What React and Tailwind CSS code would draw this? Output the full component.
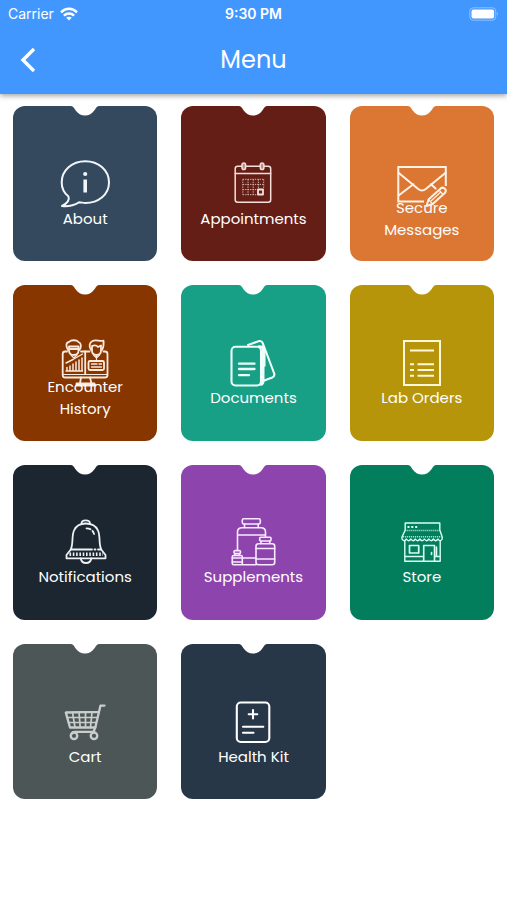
import React from "react";

const Icon = ({ children, className = "text-white", strokeWidth = 1.5 }) => (
  <svg
    viewBox="0 0 50 50"
    className={`h-[50px] w-[50px] shrink-0 ${className}`}
    fill="none"
    stroke="currentColor"
    strokeWidth={strokeWidth}
    strokeLinecap="round"
    strokeLinejoin="round"
    aria-hidden="true"
  >
    {children}
  </svg>
);

const AboutIcon = () => (
  <Icon className="text-slate-100" strokeWidth={2}>
    <path d="M8.5 37.5C4 34 1.7 29 1.7 23.5C1.7 11.5 12 2.2 25.3 2.2S49 11.5 49 23.5S38.5 44 25.3 44C23 44 21 43.2 19 43.3C14.5 46 8 47.7 2 47C6 45 9.8 41.5 8.5 37.5Z" />
    <path d="M25.2 20.5V33.5" strokeWidth="3.6" strokeLinecap="butt" />
    <circle cx="25.2" cy="15" r="2.1" fill="currentColor" stroke="none" />
  </Icon>
);

const CalendarIcon = () => (
  <Icon className="text-[#f3dfdc]" strokeWidth={1.5}>
    <rect x="7.2" y="7.2" width="35.5" height="36" rx="2.5" />
    <path d="M7.2 14.6H42.7" />
    <rect x="14" y="4" width="3.6" height="6.6" rx="1.8" fill="#b98a85" />
    <rect x="32.3" y="4" width="3.6" height="6.6" rx="1.8" fill="#b98a85" />
    <path
      d="M14.8 20.3H35.7M14.8 25.4H35.7M14.8 30.6H35.7M14.8 35.7H30M14.8 20.3V35.7M20 20.3V35.7M25.2 20.3V35.7M30.4 20.3V35.7M35.7 20.3V30"
      strokeWidth="1"
      strokeDasharray="1.4 1"
      strokeLinecap="butt"
      opacity="0.75"
    />
    <rect x="30" y="30.5" width="5" height="5" strokeWidth="1.8" />
  </Icon>
);

const MessageIcon = () => (
  <Icon className="text-[#fff3e8]" strokeWidth={2}>
    <path d="M48.8 27V8H1.3V42.5H27" strokeLinecap="butt" strokeLinejoin="miter" />
    <path d="M1.5 13.8L21.2 30Q25 32.8 28.8 30L48.6 13.8" />
    <path d="M1.6 36.5L16.3 25.2M34 25.2L38.6 29.5" />
    <path d="M29.5 47L31.5 40.5L43.7 29.4Q46 27.7 48 29.9Q49.7 32 47.8 34L35.7 45Z" />
    <path d="M31.5 40.5L35.7 45M42 31L46 35.5M34.5 41.5L43.5 33.3" strokeWidth="1.2" />
  </Icon>
);

const EncounterIcon = () => (
  <Icon className="text-[#fbeadf]" strokeWidth={1.8}>
    <path d="M7 13.5H5Q2.7 13.5 2.7 16V37Q2.7 39.5 5 39.5H45Q47.5 39.5 47.5 37V16Q47.5 13.5 45 13.5H43.5M21 13.5H29.5" />
    <path d="M2.7 36.5H47.5" strokeWidth="1.2" />
    <path d="M25.2 13.5V36" />
    {/* people */}
    <path d="M8 12C5.5 8 6 4.5 9 4C11 1.7 16.5 1.6 18.5 4C21.5 5 21.5 9 19.5 12" />
    <path d="M9 8.5H18.5V12.5Q18.5 17 13.8 17T9 12.5ZM9 11H18.5" />
    <path d="M11 17L13.8 20L17 17" strokeWidth="1.2" />
    <path d="M31 12C28.5 8 29.5 4.5 32.5 3C36 1.3 40 3.8 43.5 2.7C44 7 43.5 9.5 42 12" />
    <path d="M32 8Q36 6.500 38 9L41 7.500V12.5Q41 17 36.5 17T32 12.5Z" />
    <path d="M33.5 17L36.5 20L39.5 17M36.5 17V22.5" strokeWidth="1.2" />
    {/* bar chart */}
    <path
      d="M7 33V29M10 33V27.5M13 33V25.5M16 33V23.5M19 33V21.5M22 33V19.5M5.5 33H23"
      strokeLinecap="butt"
      strokeWidth="1.5"
    />
    <path d="M6 25L13 21.5L22.5 16" strokeWidth="1.4" />
    {/* record */}
    <rect x="28.5" y="23" width="15.5" height="9" rx="1.5" />
    <path d="M31.5 26H37M39 26H41.5M31.5 29H41.5" strokeWidth="1.3" />
    <path d="M21 39.5L20 45.5M30 39.5L31.5 45.5M16.5 45.5H34.5V47.5H16.5Z" />
  </Icon>
);

const DocumentsIcon = () => (
  <Icon className="text-[#effffb]" strokeWidth={2.1}>
    <path d="M20 7L30.5 3.2Q33.5 2.3 34.7 5L46.2 35.5Q47 38.3 44.2 39.5L35 43" />
    <path d="M31 8.5Q35.2 8.5 35.2 12.5V42.5Q35.2 46 33 46.5" strokeWidth="2.6" />
    <path d="M34.8 8L36.8 14V28" strokeWidth="1.5" />
    <rect x="3.5" y="8.7" width="29.5" height="38.8" rx="4" />
    <path d="M11 25.7H26.5M11 31H26.5M11 37.2H21" strokeWidth="2.3" />
  </Icon>
);

const LabOrdersIcon = () => (
  <Icon className="text-[#fff8d8]" strokeWidth={2}>
    <g strokeLinecap="butt" strokeLinejoin="miter">
      <rect x="7" y="3" width="36" height="44" />
      <path d="M13 12.4H37M13 26.2H17M20.5 26.2H37M13 31.9H17M20.5 31.9H37M13 37.7H17M20.5 37.7H37" />
    </g>
  </Icon>
);

const BellIcon = () => (
  <Icon className="text-[#edf1f4]" strokeWidth={1.8}>
    <path d="M21.5 6.5Q21.5 3.3 25.7 3.3T30 6.5" />
    <path d="M10.8 32.5C13.5 26 11.5 19 14 13.5C16 9 20 6.5 25.7 6.5S36 9 38 13.5C40.5 19 38.5 26 41.2 32.5" />
    <path d="M10.8 32.5H32M34.5 32.5H35.5M38 32.5H41.2M10.8 32.5L6.5 38V41.3H45.5V38L41.2 32.5" />
    <path d="M9.5 37.2H43" strokeWidth="3.6" strokeDasharray="1.6 1.7" strokeLinecap="butt" />
    <path d="M20.8 41.5Q21.5 46 26 46T31.3 41.5" />
    <path d="M26.5 11.3Q29 11.3 30.5 12.3M32.5 14Q33.8 15.3 34 17" />
  </Icon>
);

const SupplementsIcon = () => (
  <Icon className="text-[#f8eaff]" strokeWidth={1.6}>
    <rect x="14.3" y="1.7" width="18" height="5.3" rx="1.5" />
    <path d="M16.5 7V10.5M30.2 7V10.5" />
    <path d="M9.5 33V15Q9.5 10.7 14 10.7H33Q37.5 10.7 37.5 15V20M9.5 18H37.5M14.5 41H28M14.5 47.7H28" />
    <rect x="31.7" y="20.3" width="11.3" height="3.7" rx="1" />
    <path d="M33 24V26.5M41.7 24V26.5" />
    <rect x="28" y="26.7" width="18.7" height="21" rx="2.5" />
    <path d="M28 31.5H46.7M28 42H46.7" />
    <rect x="6" y="33.6" width="6.5" height="3" rx="1" />
    <rect x="4.3" y="38.5" width="10" height="9.2" rx="1.2" />
    <path d="M7 36.6V38.5M11.5 36.6V38.5M4.3 41H14.3M4.3 45H14.3" />
  </Icon>
);

const StoreIcon = () => (
  <Icon className="text-[#d9fff3]" strokeWidth={1.4}>
    <path d="M8.2 6H42.8V13L45.2 20V22Q43.2 25.5 41 22Q38.7 25.5 36.4 22Q34.1 25.5 31.9 22Q29.6 25.5 27.4 22Q25.2 25.5 22.9 22Q20.6 25.5 18.4 22Q16.1 25.5 13.9 22Q11.6 25.5 9.4 22Q7 25.5 5 22V20L8.2 13Z" />
    <path
      d="M8.2 13.5H42.8M6 19.8H44.5"
      strokeDasharray="1.2 0.8"
      strokeLinecap="butt"
      opacity="0.75"
    />
    <path d="M10.5 10H12.5M14.3 10H16.3M18.2 10H20.2" strokeWidth="2" strokeLinecap="butt" />
    <path d="M7.8 24V44.2H43.2V24M7.8 39.5H26.5M37.5 39.5H43.2" />
    <rect x="12.5" y="28.5" width="9.2" height="7.5" strokeWidth="1.7" />
    <path d="M26.7 44V28.5H37.5V44M34.5 35.5V37.5M39.500 30V39" strokeWidth="1.6" />
  </Icon>
);

const CartIcon = () => (
  <Icon className="text-[#c9cecd]" strokeWidth={2.3}>
    <path d="M44.5 8.6H40.5L35.3 30.5H10L5.8 15.5L38.5 14.8" />
    <path
      d="M7 20.5H37.2M8.5 25.5H36.2M12.5 15.3L15 30.5M19 15.2L20.2 30.5M25.5 15V30.5M32 15L30.5 30.5"
      strokeWidth="1.7"
    />
    <path d="M35.3 30.5L33.5 34.8H15Q12 34.8 11.5 37" />
    <circle cx="14" cy="38.8" r="3.3" />
    <circle cx="34" cy="38.8" r="3.3" />
  </Icon>
);

const HealthKitIcon = () => (
  <Icon strokeWidth={2.1}>
    <rect x="8.8" y="5.5" width="32.5" height="39.5" rx="4" />
    <path d="M25 13V21.5M20.7 17.3H29.3M15 29.7H35.3M15 35.7H25.5" />
  </Icon>
);

const menuItems = [
  { label: "About", icon: AboutIcon, color: "bg-[#34495e]" },
  { label: "Appointments", icon: CalendarIcon, color: "bg-[#641e16]" },
  { label: "Secure Messages", icon: MessageIcon, color: "bg-[#dc7633]" },
  { label: "Encounter History", icon: EncounterIcon, color: "bg-[#873600]" },
  { label: "Documents", icon: DocumentsIcon, color: "bg-[#17a085]" },
  { label: "Lab Orders", icon: LabOrdersIcon, color: "bg-[#b7950b]" },
  { label: "Notifications", icon: BellIcon, color: "bg-[#1b2631]" },
  { label: "Supplements", icon: SupplementsIcon, color: "bg-[#8e44ad]" },
  { label: "Store", icon: StoreIcon, color: "bg-[#027e5d]" },
  { label: "Cart", icon: CartIcon, color: "bg-[#4d5656]" },
  { label: "Health Kit", icon: HealthKitIcon, color: "bg-[#283747]" },
];

const StatusBar = () => (
  <div className="grid h-7 grid-cols-3 items-center px-2 font-['Inter',sans-serif] text-sm">
    <div className="flex items-center gap-1.5">
      <span>Carrier</span>
      <svg viewBox="0 0 18 14" className="h-3.5 w-[18px]" fill="none" stroke="currentColor" strokeWidth="2.5">
        <path d="M1 5.3C5.5 0.7 12.5 0.7 17 5.3" />
        <path d="M3.9 8.6C6.8 5.8 11.2 5.8 14.1 8.6" />
        <path d="M9 13.6L6.2 10.8Q9 8.5 11.8 10.8Z" fill="currentColor" stroke="none" />
      </svg>
    </div>
    <span className="text-center font-semibold">9:30 PM</span>
    <svg viewBox="0 0 30 14" className="h-3.5 w-[30px] justify-self-end" fill="none">
      <rect x="0.8" y="0.8" width="26" height="12.4" rx="3.5" stroke="#fff" strokeOpacity="0.4" />
      <rect x="2.5" y="2.5" width="22.6" height="9" rx="2" fill="#fff" />
      <path d="M28.2 5Q29.8 7 28.2 9Z" fill="#fff" fillOpacity="0.5" />
    </svg>
  </div>
);

const MenuCard = ({ label, icon: CardIcon, color }) => (
  <a
    href="#"
    className={`relative flex aspect-[144/155] flex-col items-center justify-center rounded-xl pt-8 text-white ${color}`}
  >
    <svg viewBox="0 0 28 10" className="absolute top-0 left-1/2 h-2.5 w-7 -translate-x-1/2" aria-hidden="true">
      <path d="M0 0C2.5 0.3 3 2 4.5 4.2C7 7.8 10 9.5 14 9.5S21 7.8 23.5 4.2C25 2 25.5 0.3 28 0Z" fill="#fff" />
    </svg>
    <CardIcon />
    <span className="relative -mt-3 flex h-11 w-28 items-center justify-center text-center text-[15px] leading-[22px]">
      {label}
    </span>
  </a>
);

const App = () => {
  return (
    <div className="min-h-screen bg-white font-['Poppins','Inter',sans-serif]">
      <header className="relative bg-[#4297ff] pb-0.5 text-white shadow-[0_2px_5px_rgba(0,0,0,0.35)]">
        <StatusBar />
        <div className="grid h-16 grid-cols-[56px_1fr_56px] items-center">
          <button type="button" aria-label="Back" className="flex h-12 items-center justify-center">
            <svg viewBox="0 0 16 26" className="h-[26px] w-4" fill="none" stroke="currentColor" strokeWidth="3.4">
              <path d="M14 2L3 13L14 24" />
            </svg>
          </button>
          <h1 className="text-center text-2xl">Menu</h1>
        </div>
      </header>

      <main className="grid grid-cols-3 gap-6 px-[13px] py-3">
        {menuItems.map((item) => (
          <MenuCard key={item.label} {...item} />
        ))}
      </main>
    </div>
  );
};

export default App;
